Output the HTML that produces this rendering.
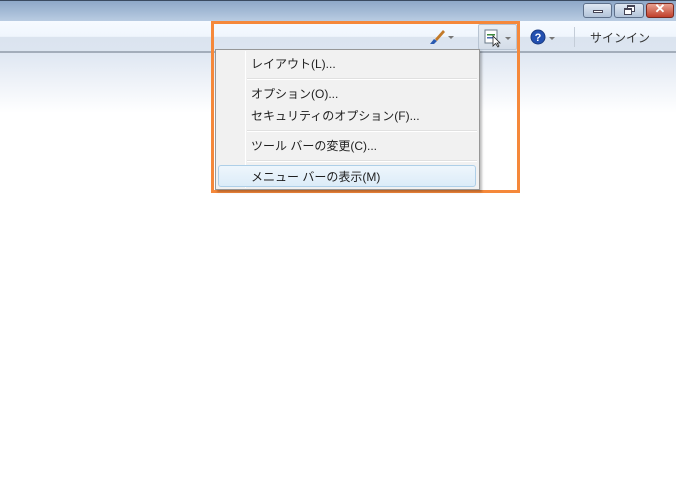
<!DOCTYPE html>
<html><head><meta charset="utf-8"><style>
*{margin:0;padding:0;box-sizing:border-box}
body{width:676px;height:481px;overflow:hidden;background:#fff;position:relative;font-family:"Liberation Sans","Noto Sans CJK JP",sans-serif;font-size:12px;color:#1e1e1e}
.abs{position:absolute}
#title{left:0;top:0;width:676px;height:21px;background:linear-gradient(#8ea8c8,#b9cce2);border-top:1px solid #3a4a60}
#tb{left:0;top:21px;width:676px;height:31px;background:linear-gradient(#f6faff 0,#f0f6fd 50%,#dbe4ef 52%,#dce5f0 100%)}
#line{left:0;top:51px;width:676px;height:2px;background:#a3adba}
#below{left:0;top:53px;width:676px;height:60px;background:linear-gradient(#dfe7f2,#fff)}
.wb{top:3px;height:15px;border:1px solid #5e708a;border-radius:3px;background:linear-gradient(#dfe8f3,#b3c4d9)}
#orange{left:211px;top:21px;width:309px;height:172px;border:3px solid #f5883a}
#menu{left:215px;top:49px;width:265px;height:141px;background:#f1f1f1;border:1px solid #979797;box-shadow:2px 2px 2px rgba(0,0,0,.25)}
.gut{left:29px;top:1px;width:1px;height:137px;background:#e2e3e3;border-right:1px solid #fff}
.sep{left:31px;width:230px;height:2px;border-top:1px solid #e0e0e0;border-bottom:1px solid #fff}
.it{left:35px;font-size:12px;white-space:nowrap}
</style></head><body>
<div id="title" class="abs"></div>
<div class="abs wb" style="left:583px;width:29px"><div class="abs" style="left:9px;top:6px;width:10px;height:3px;background:#fff;border:1px solid #445"></div></div>
<div class="abs wb" style="left:614px;width:30px">
<div class="abs" style="left:12px;top:1px;width:8px;height:7px;border:1px solid #445;border-top-width:2px;background:#fff"></div>
<div class="abs" style="left:9px;top:4px;width:8px;height:7px;border:1px solid #445;border-top-width:2px;background:#fff"></div></div>
<div class="abs wb" style="left:646px;width:28px;border-color:#7a2a20;background:linear-gradient(#e8a090,#c0402c)"><div class="abs" style="left:0;top:-3px;width:26px;text-align:center;color:#fff;font-weight:bold;font-size:13px">✕</div></div>
<div id="tb" class="abs"></div>
<div id="line" class="abs"></div>
<div id="below" class="abs"></div>
<svg class="abs" style="left:428px;top:27px" width="30" height="20"><path d="M2 17 L6 12 L9 14 L6 17Z" fill="#2a5ab0"/><path d="M7 12 L15 3 L17 5 L9 14Z" fill="#c27a2a"/><path d="M20 9 L26 9 L23 12Z" fill="#777"/></svg>
<div class="abs" style="left:478px;top:24px;width:39px;height:26px;border:1px solid #b8c4d2;border-radius:2px;background:linear-gradient(#e8eef5,#d4dde8)"></div>
<svg class="abs" style="left:484px;top:28px" width="30" height="20"><rect x="1" y="2" width="12" height="13" fill="#fff" stroke="#6a7a8a"/><rect x="3" y="6" width="8" height="1.5" fill="#3a8a3a"/><rect x="3" y="9" width="8" height="1.5" fill="#4a6ab0"/><path d="M9 8 L9 18 L11.5 15.5 L14 19 L15 18 L13 15 L16 15Z" fill="#fff" stroke="#222" stroke-width=".8"/><path d="M21 9 L27 9 L24 12Z" fill="#777"/></svg>
<svg class="abs" style="left:530px;top:28px" width="30" height="20"><circle cx="8" cy="9" r="7" fill="#2350b0" stroke="#1a3a80"/><text x="8" y="13" font-size="11" font-weight="bold" fill="#fff" text-anchor="middle" font-family="Liberation Sans">?</text><path d="M19 9 L25 9 L22 12Z" fill="#777"/></svg>
<div class="abs" style="left:574px;top:27px;width:1px;height:20px;background:#c4cdd8"></div>
<div class="abs" style="left:590px;top:29px;font-size:12px;color:#333">サインイン</div>
<div id="orange" class="abs"></div>
<div id="menu" class="abs">
<div class="abs gut"></div>
<div class="abs it" style="top:5px">レイアウト(L)...</div>
<div class="abs sep" style="top:28px"></div>
<div class="abs it" style="top:35px">オプション(O)...</div>
<div class="abs it" style="top:57px">セキュリティのオプション(F)...</div>
<div class="abs sep" style="top:80px"></div>
<div class="abs it" style="top:87px">ツール バーの変更(C)...</div>
<div class="abs sep" style="top:110px"></div>
<div class="abs" style="left:2px;top:115px;width:258px;height:22px;border:1px solid #aecfe8;border-radius:3px;background:linear-gradient(#eef6fc,#dcecf8)"></div>
<div class="abs it" style="top:118px">メニュー バーの表示(M)</div>
</div>
</body></html>
